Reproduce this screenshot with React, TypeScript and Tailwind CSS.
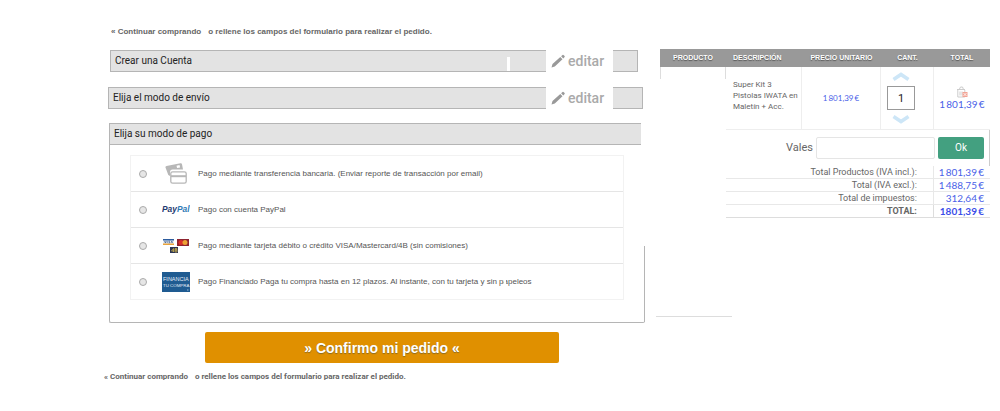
import type { ReactNode } from "react";

type StepBarProps = {
  title: string;
  className?: string;
  children?: ReactNode;
};

type PaymentMethod = {
  id: string;
  label: ReactNode;
  logo: ReactNode;
};

const TOTALS = [
  { label: "Total Productos (IVA incl.):", value: "1\u2009801,39\u2009€" },
  { label: "Total (IVA excl.):", value: "1\u2009488,75\u2009€" },
  { label: "Total de impuestos:", value: "312,64\u2009€" },
];

function CardsIcon() {
  return (
    <svg viewBox="0 0 22 21" className="h-[21px] w-[22px]" aria-hidden="true">
      <path d="M1.500 3 15.400.2a1.300 1.300 0 0 1 1.600 1L18 6.500H7.600a2.600 2.600 0 0 0-2.600 2.600V13L3.300 12 .5 4.600A1.300 1.300 0 0 1 1.500 3Z" fill="#b7b7b7" />
      <path d="m11.500 2.700 3-.7.6 2.400-3 .7Z" fill="#fff" />
      <rect x="5.800" y="8.800" width="15.400" height="11.400" rx="1.800" fill="#fff" stroke="#b7b7b7" strokeWidth="1.300" />
      <path d="M6 13.200h15" stroke="#b7b7b7" strokeWidth="2" />
    </svg>
  );
}

function PayPalLogo() {
  return (
    <svg viewBox="0 0 28 12" className="h-3 w-7" role="img" aria-label="PayPal">
      <text x="0" y="8" fontFamily="Liberation Sans, sans-serif" fontSize="8.400" fontWeight="700" fontStyle="italic" fill="#1f3a70">
        Pay<tspan fill="#2f7ab5">Pal</tspan>
      </text>
    </svg>
  );
}

function CardBrandsLogo() {
  return (
    <svg viewBox="0 0 28 16" className="h-4 w-7" role="img" aria-label="VISA, Mastercard y 4B">
      <rect x="1" y="1" width="11" height="6" fill="#e8edf2" />
      <path d="M1 1h11v1.500H1Z" fill="#2d5c9e" />
      <path d="M1 5.500h11V7H1Z" fill="#e9a33b" />
      <path d="m2.500 3 .8 2 .8-2M5.200 3v2M8 3.200H6.800L7.800 4.800H6.500M9 5l.8-2 .8 2" fill="none" stroke="#24477f" strokeWidth="0.600" />
      <rect x="15" y="1" width="12" height="7" fill="#8e2430" />
      <circle cx="19" cy="4.400" r="2.500" fill="#d9302b" />
      <circle cx="23" cy="4.400" r="2.500" fill="#eda334" />
      <rect x="8" y="9" width="8" height="6" fill="#2b3553" />
      <path d="M11.500 14v-3.500L9.500 13h2.500M13 10.500h1.800v1.500H13h2v2h-2Z" fill="none" stroke="#d9b94c" strokeWidth="0.700" />
    </svg>
  );
}

function FinanciaLogo() {
  return (
    <svg viewBox="0 0 28 20" className="h-5 w-7" role="img" aria-label="Financia tu compra">
      <rect width="28" height="20" fill="#1f5b91" />
      <g fontFamily="Liberation Sans, sans-serif" fill="#e4eef7">
        <text x="1" y="9" fontSize="5.500">FINANCIA</text>
        <text x="1" y="15" fontSize="4.400">TU COMPRA</text>
      </g>
      <path d="M25 18h1.500" stroke="#9dbad4" />
    </svg>
  );
}

const PAYMENT_METHODS: PaymentMethod[] = [
  {
    id: "transferencia",
    label: "Pago mediante transferencia bancaria. (Enviar reporte de transacción por email)",
    logo: <CardsIcon />,
  },
  { id: "paypal", label: "Pago con cuenta PayPal", logo: <PayPalLogo /> },
  {
    id: "tarjeta",
    label: "Pago mediante tarjeta débito o crédito VISA/Mastercard/4B (sin comisiones)",
    logo: <CardBrandsLogo />,
  },
  {
    id: "financiado",
    label: (
      <>
        Pago Financiado Paga tu compra hasta en 12 plazos. Al instante, con tu tarjeta y sin p
        <span className="relative">
          a<span className="absolute inset-y-0 left-0 w-[2px] bg-white" />
        </span>
        peleos
      </>
    ),
    logo: <FinanciaLogo />,
  },
];

function ContinueLine({ className }: { className?: string }) {
  return (
    <p className={`text-[8px] leading-3 font-bold text-[#666] ${className ?? ""}`}>
      <a href="#tienda">« Continuar comprando</a>
      <span className="ml-[7px]">o rellene los campos del formulario para realizar el pedido.</span>
    </p>
  );
}

function StepBar({ title, className, children }: StepBarProps) {
  return (
    <div className={`flex h-[22px] items-center justify-between border border-[#b5b5b5] bg-[#e3e3e3] pl-1 ${className ?? ""}`}>
      <h2 className="font-[Roboto,sans-serif] text-[10px] leading-4 text-[#222]">{title}</h2>
      {children}
    </div>
  );
}

function EditButton() {
  return (
    <button
      type="button"
      className="flex h-[30px] w-[67px] shrink-0 items-center gap-[3px] bg-white pl-[5px] font-[Roboto,sans-serif] text-[14px] leading-5 font-medium text-[#aaa]"
    >
      <svg viewBox="0 0 14 14" className="h-[14px] w-[14px]" aria-hidden="true">
        <path d="M.5 13.500 1.500 10 9.300 2.900l2.200 2.300L3.800 12.500ZM10.100 2.200l1.400-1.300q.5-.4 1 0l1.100 1.200q.4.500 0 1l-1.300 1.300Z" fill="#999" />
      </svg>
      editar
    </button>
  );
}

function StepArrow({ down }: { down?: boolean }) {
  return (
    <button type="button" aria-label={down ? "Quitar uno" : "Añadir uno"} className="block">
      <svg viewBox="0 0 18 9" className="h-[9px] w-[18px]" aria-hidden="true">
        <path d={down ? "M1.500 1.500 9 6.500l7.500-5" : "M1.500 7.500 9 2.500l7.500 5"} fill="none" stroke="#cde6f7" strokeWidth="3.600" />
      </svg>
    </button>
  );
}

function CartSummary() {
  const head = "bg-[#999] p-0 font-bold";

  return (
    <table className="w-full table-fixed border-separate border-spacing-0 text-[#666]">
      <colgroup>
        <col className="w-[20%]" />
        <col className="w-[23%]" />
        <col className="w-[24%]" />
        <col className="w-[16%]" />
        <col className="w-[17%]" />
      </colgroup>
      <thead>
        <tr className="h-[18px] text-[7px] leading-3 text-white [text-shadow:0_1px_1px_#555]">
          <th className={head}>PRODUCTO</th>
          <th className={`${head} pl-[7px]! text-left`}>DESCRIPCIÓN</th>
          <th className={head}>PRECIO UNITARIO</th>
          <th className={head}>CANT.</th>
          <th className={head}>TOTAL</th>
        </tr>
      </thead>
      <tbody>
        <tr className="h-[63px]">
          <td className="p-0 align-top">
            <div className="h-3 border-x border-[#ddd]" />
          </td>
          <td className="border-r border-b border-[#eee] p-0 pb-[6px] pl-[7px] font-[Roboto,sans-serif] text-[8px] leading-[11px]">
            Super Kit 3<br />
            Pistolas IWATA en Maletín + Acc.
          </td>
          <td className="border-r border-b border-[#eee] p-0 text-center font-[Lato,sans-serif] text-[8px] text-[#4a5fe8]">
            {"1\u2009801,39\u2009€"}
          </td>
          <td className="border-r border-b border-[#eee] p-0">
            <div className="flex flex-col items-center gap-[5px] pr-3">
              <StepArrow />
              <input
                aria-label="Cantidad"
                defaultValue="1"
                className="h-6 w-7 border border-[#999] bg-white text-center font-[Roboto,sans-serif] text-[11px] text-[#222]"
              />
              <StepArrow down />
            </div>
          </td>
          <td className="border-b border-[#eee] p-0">
            <div className="flex flex-col items-center">
              <button type="button" aria-label="Eliminar" className="block">
                <svg viewBox="0 0 12 12" className="h-3 w-3" aria-hidden="true">
                  <path d="M1 3.500h8M3.500 3l1-2h2l.8 2M1.800 4v7h7V4M4 5.500v4M6 5.500v4" fill="none" stroke="#ccc" />
                  <rect x="6.500" y="6" width="5" height="5" fill="#f2a394" />
                  <path d="m7.500 7 3 3m0-3-3 3" stroke="#fff" strokeWidth="0.800" />
                </svg>
              </button>
              <span className="font-[Lato,sans-serif] text-[10px] leading-3 text-[#4a5fe8]">{"1\u2009801,39\u2009€"}</span>
            </div>
          </td>
        </tr>
      </tbody>
      <tfoot className="text-right font-[Roboto,sans-serif] text-[9px] leading-3">
        <tr className="h-9">
          <td />
          <td colSpan={4} className="border-r border-[#ccc] p-0">
            <form className="flex items-center justify-end gap-[3px] pr-[5px]" onSubmit={(e) => e.preventDefault()}>
              <label htmlFor="vale" className="text-[11px] leading-4">
                Vales
              </label>
              <input id="vale" className="h-[22px] w-[119px] rounded-[2px] border border-[#e5e5e5] bg-white px-1" />
              <button type="submit" className="h-[22px] w-[46px] rounded-[2px] bg-[#43a080] text-[10px] text-white">
                Ok
              </button>
            </form>
          </td>
        </tr>
        {TOTALS.map((row) => (
          <tr key={row.label} className="h-[13px]">
            <td className="p-0" />
            <th colSpan={3} scope="row" className="border-r border-b border-[#e8e8e8] p-0 pr-4 text-right font-normal">
              {row.label}
            </th>
            <td className="border-b border-[#e8e8e8] p-0 pr-[6px] font-[Lato,sans-serif] text-[10px] text-[#4a5fe8]">
              {row.value}
            </td>
          </tr>
        ))}
        <tr className="h-[13px]">
          <td className="p-0" />
          <th colSpan={3} scope="row" className="border-r border-b border-[#ddd] p-0 pr-4 text-right font-bold">
            TOTAL:
          </th>
          <td className="border-b border-[#ddd] p-0 pr-[6px] font-[Lato,sans-serif] text-[10px] font-bold text-[#3a4de8]">
            {"1801,39\u2009€"}
          </td>
        </tr>
      </tfoot>
    </table>
  );
}

export default function App() {
  return (
    <main className="bg-white pt-[26px] pr-[10px] pb-7 pl-[109px] font-['Liberation_Sans',Arial,sans-serif]">
      <ContinueLine className="pl-[2px]" />

      <div className="mt-[11px] grid grid-cols-[minmax(0,536fr)_minmax(0,330fr)] gap-[15px]">
        <div className="pt-[1px]">
          <StepBar title="Crear una Cuenta" className="relative mr-[7px] ml-[1px] pr-6">
            <span className="absolute right-[127px] bottom-0 h-[14px] w-[3px] bg-white" />
            <EditButton />
          </StepBar>
          <StepBar title="Elija el modo de envío" className="mt-[15px] mr-[2px] -ml-px pr-[29px]">
            <EditButton />
          </StepBar>

          <section className="mt-[14px]">
            <StepBar title="Elija su modo de pago" className="mr-1 border-r-0" />
            <div className="relative rounded-b-[2px] border-b border-l border-[#b5b5b5] pt-[10px] pr-[21px] pb-[22px] pl-5">
              <span className="absolute right-0 bottom-0 h-[76px] w-px bg-[#b5b5b5]" />
              <fieldset aria-label="Modo de pago" className="border-x border-t border-[#f2f2f2]">
                {PAYMENT_METHODS.map((method) => (
                  <label
                    key={method.id}
                    className="flex h-9 items-center border-b border-[#e5e5e5] pl-2 text-[8px] leading-3 text-[#555] last:border-[#f2f2f2]"
                  >
                    <input
                      type="radio"
                      name="pago"
                      value={method.id}
                      className="h-2 w-2 shrink-0 appearance-none rounded-full border border-[#aaa] bg-[#e6e6e6] checked:bg-[#777]"
                    />
                    <span className="ml-[15px] flex w-7 shrink-0 justify-center">{method.logo}</span>
                    <span className="ml-2">{method.label}</span>
                  </label>
                ))}
              </fieldset>
            </div>
          </section>
        </div>

        <div className="flex flex-col justify-between">
          <CartSummary />
          <hr className="mb-[6px] -ml-1 w-[76px] border-[#ddd]" />
        </div>
      </div>

      <div className="grid grid-cols-[minmax(0,536fr)_minmax(0,330fr)] gap-[15px]">
        <div className="flex justify-center pt-[9px] pr-[86px] pl-24">
          <button
            type="button"
            className="h-[31px] w-full rounded-[2px] bg-[#e09000] text-[14px] leading-4 font-bold text-white [text-shadow:0_1px_1px_#8a6a20]"
          >
            » Confirmo mi pedido «
          </button>
        </div>
      </div>

      <ContinueLine className="-ml-[5px] pt-2 font-[Roboto,sans-serif]" />
    </main>
  );
}
